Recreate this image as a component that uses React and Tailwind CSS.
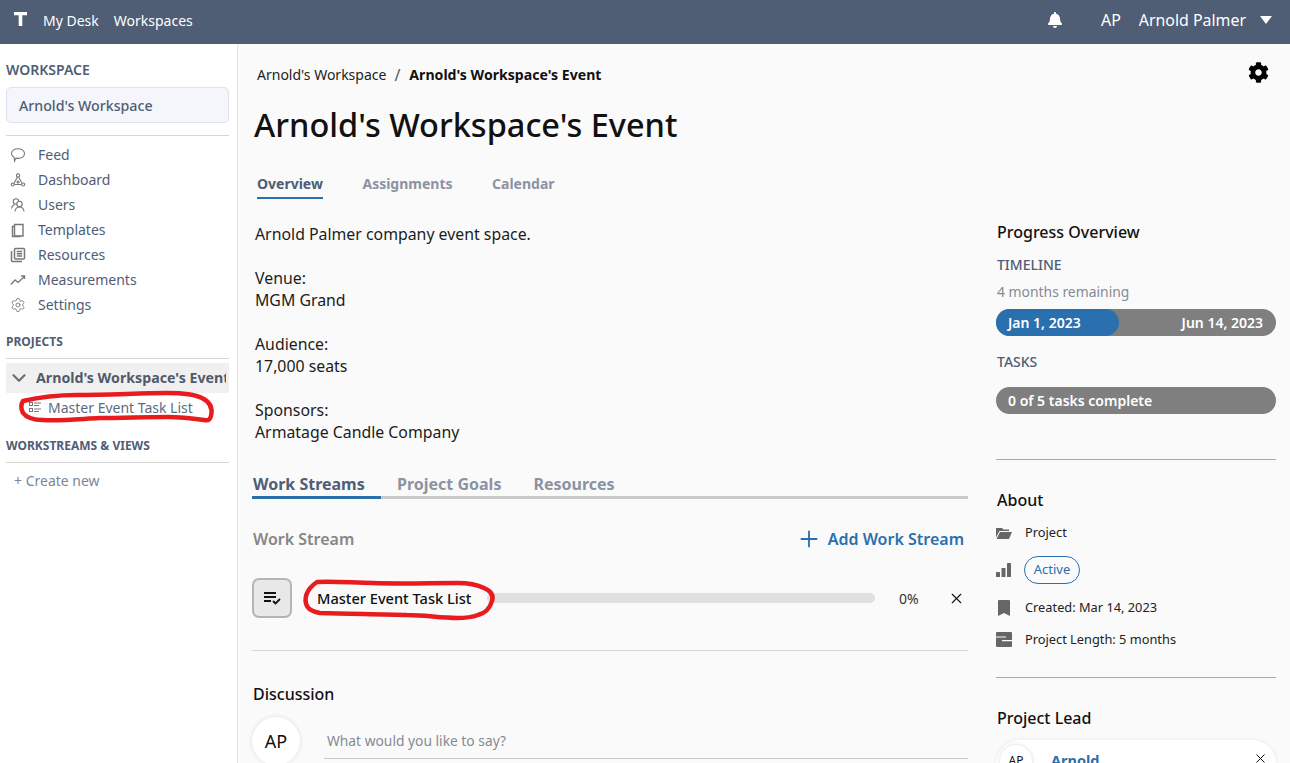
import React from "react";
import { Settings, ChevronDown, Plus, X } from "lucide-react";

const iconProps = { width: 16, height: 16, viewBox: "0 0 16 16", fill: "none", stroke: "currentColor", strokeWidth: 1.1, className: "text-[#777]" };

const FeedIcon = () => (
  <svg {...iconProps}><path d="M8 1.800c3.700 0 6.500 2 6.500 4.800S11.700 11.400 8 11.400c-.7 0-1.300 0-2-.2L4.500 14l-.3-3.500C2.600 9.600 1.500 8.200 1.500 6.600c0-2.800 2.800-4.800 6.500-4.800z" /></svg>
);
const DashIcon = () => (
  <svg {...iconProps}><circle cx="8" cy="3.500" r="1.600" /><circle cx="2.800" cy="12.500" r="1.500" /><circle cx="13.200" cy="12.500" r="1.500" /><circle cx="8" cy="10" r="1" /><path d="M7.400 5L4 11.300M8.600 5L12 11.300M4.300 12.500h7.400" /></svg>
);
const UsersIcon = () => (
  <svg {...iconProps}><circle cx="6" cy="4.500" r="2.700" /><path d="M1.500 11.500c.3-2 1.500-3.400 3-3.800" /><circle cx="9.500" cy="7" r="2.700" fill="#fff" /><path d="M5 14.500c.3-2.700 2-4.500 4.500-4.500s4.200 1.800 4.500 4.500" /></svg>
);
const TemplatesIcon = () => (
  <svg {...iconProps} strokeWidth={1.4}><path d="M4.500 2.500h8.500v11.500H4.500z" /><path d="M4.500 4.500H2.500v10h8" /></svg>
);
const ResourcesIcon = () => (
  <svg {...iconProps} strokeWidth={1.5}><rect x="4.500" y="1.500" width="10" height="10.500" rx="1" /><path d="M1.500 4v9.500a1 1 0 001 1H12M6.800 4.500h5.400M6.800 6.800h5.400M6.800 9.100h5.400" /></svg>
);
const MeasureIcon = () => (
  <svg {...iconProps} strokeWidth={1.3}><path d="M1 12.500l4-4.500 3 2.500 6.500-6M11 4h3.500v3" /></svg>
);
const SettingsIcon = () => <Settings size={16} strokeWidth={1.3} className="text-[#777]" />;

const nav = [
  ["Feed", FeedIcon],
  ["Dashboard", DashIcon],
  ["Users", UsersIcon],
  ["Templates", TemplatesIcon],
  ["Resources", ResourcesIcon],
  ["Measurements", MeasureIcon],
  ["Settings", SettingsIcon],
];

function Gear({ className }) {
  return (
    <svg viewBox="0 0 512 512" className={className} fill="currentColor">
      <path d="M487.4 315.7l-42.6-24.6c4.3-23.2 4.3-47 0-70.2l42.6-24.6c4.9-2.8 7.1-8.6 5.5-14-11.1-35.6-30-67.8-54.7-94.6-3.8-4.1-10-5.1-14.8-2.3L380.8 110c-17.9-15.4-38.5-27.3-60.8-35.1V25.8c0-5.6-3.9-10.5-9.4-11.7-36.7-8.2-74.3-7.8-109.2 0-5.5 1.2-9.4 6.1-9.4 11.7V75c-22.2 7.9-42.8 19.8-60.8 35.1L88.7 85.5c-4.9-2.8-11-1.9-14.8 2.3-24.7 26.7-43.6 58.9-54.7 94.6-1.7 5.4.6 11.2 5.5 14L67.3 221c-4.3 23.2-4.3 47 0 70.2l-42.6 24.6c-4.9 2.8-7.1 8.6-5.5 14 11.1 35.6 30 67.8 54.7 94.6 3.8 4.1 10 5.1 14.8 2.3l42.6-24.6c17.9 15.4 38.5 27.3 60.8 35.1v49.2c0 5.6 3.9 10.5 9.4 11.7 36.7 8.2 74.3 7.8 109.2 0 5.5-1.2 9.4-6.1 9.4-11.7v-49.2c22.2-7.9 42.8-19.8 60.8-35.1l42.6 24.6c4.9 2.8 11 1.9 14.8-2.3 24.7-26.7 43.6-58.9 54.7-94.6 1.500-5.500-.7-11.300-5.600-14.100zM256 336c-44.100 0-80-35.900-80-80s35.900-80 80-80 80 35.900 80 80-35.900 80-80 80z" />
    </svg>
  );
}

function Rule({ className = "" }) {
  return <div className={`h-px shrink-0 ${className}`} />;
}

function Sidebar() {
  return (
    <aside className="w-[238px] shrink-0 border-r border-[#e4e4e4] bg-white pl-[6px] pr-2 text-[#4f5d75]">
      <div className="mt-[18px] text-[14px] leading-[16px] font-semibold">WORKSPACE</div>
      <div className="mt-[9px] flex h-[36px] items-center rounded-[5px] border border-[#dfe1ef] bg-[#f5f6fb] pl-[12px] pt-[2px] text-[14.2px] font-medium">
        Arnold's Workspace
      </div>
      <Rule className="mt-[12px] bg-[#d5d5d5]" />
      <nav className="mt-[6px] flex flex-col">
        {nav.map(([label, Icon]) => (
          <div key={label} className="flex h-[25px] items-center text-[14px]">
            <span className="flex w-[32px] shrink-0 pl-[4px]">
              <Icon />
            </span>
            {label}
          </div>
        ))}
      </nav>
      <div className="mt-[18px] text-[12px] leading-[14px] font-bold">PROJECTS</div>
      <Rule className="mt-[9px] bg-[#d5d5d5]" />
      <div className="mt-[4px] flex h-[30px] items-center overflow-hidden bg-[#f0f0f0] text-[14.2px] font-bold whitespace-nowrap">
        <span className="flex w-[30px] shrink-0 pl-[2px]">
          <ChevronDown size={22} strokeWidth={2.4} className="text-[#6f6f6f]" />
        </span>
        <span className="w-[190px] overflow-hidden text-[#525a6b]">Arnold's Workspace's Event</span>
      </div>
      <div className="flex h-[28px] items-center pl-[22px] text-[14px] text-[#5c6b84]">
        <svg viewBox="0 0 14 12" className="mr-[6px] h-[12px] w-[14px] text-[#777]" fill="none" stroke="currentColor">
          <rect x="1.500" y="1.500" width="3" height="3" />
          <rect x="1.500" y="7.500" width="3" height="3" />
          <path d="M6 2h7M6 4.500h5M6 8h7M6 10.500h5" />
        </svg>
        Master Event Task List
      </div>
      <div className="mt-[18px] text-[12px] leading-[14px] font-bold">WORKSTREAMS &amp; VIEWS</div>
      <Rule className="mt-[9px] bg-[#d5d5d5]" />
      <div className="mt-[8px] pl-[8px] text-[14px] leading-[19px] text-[#7d8797]">+ Create new</div>
    </aside>
  );
}

function Tab({ children, active }) {
  return (
    <span className={`pb-[3px] text-[14px] font-bold ${active ? "border-b-2 border-[#2a70ae] text-[#4f5d75]" : "text-[#8b93a3]"}`}>
      {children}
    </span>
  );
}

function LeftColumn() {
  return (
    <div className="w-[716px] shrink-0">
      <div className="pl-[3px] text-[15.85px] leading-[22px] text-[#1c1c1c]">
        <p>Arnold Palmer company event space.</p>
        <p className="mt-[22px]">Venue:<br />MGM Grand</p>
        <p className="mt-[22px]">Audience:<br />17,000 seats</p>
        <p className="mt-[22px]">Sponsors:<br />Armatage Candle Company</p>
      </div>
      <div className="mt-[28px] flex h-[28px] border-b-[3px] border-[#c9cacd] text-[16px] leading-[26px] font-bold text-[#8b93a3]">
        <span className="h-[28px] w-[129px] border-b-[3px] border-[#2a70ae] pl-[1px] text-[#4f5d75]">Work Streams</span>
        <span className="ml-[16px]">Project Goals</span>
        <span className="ml-[32px]">Resources</span>
      </div>
      <div className="mt-[29px] flex h-[22px] items-center justify-between pl-[1px] pr-[4px]">
        <span className="text-[16px] leading-[22px] font-semibold text-[#868686]">Work Stream</span>
        <span className="flex items-center gap-[6px] text-[16px] leading-[22px] font-semibold text-[#2a70ae]">
          <Plus size={26} strokeWidth={1.7} />
          Add Work Stream
        </span>
      </div>
      <div className="mt-[28px] flex items-center pr-[3px]">
        <span className="flex h-[40px] w-[40px] shrink-0 items-center justify-center rounded-[7px] border-2 border-[#b4b4b4] bg-[#e8e8e8]">
          <svg viewBox="0 0 18 14" className="h-[14px] w-[18px] text-[#111]" fill="none" stroke="currentColor" strokeWidth="1.800">
            <path d="M1 2h12M1 6h12M1 10h7M10 10l2.500 2.500L17 8" />
          </svg>
        </span>
        <span className="ml-[25px] mt-[2px] text-[14.6px] font-medium text-[#111] whitespace-nowrap">Master Event Task List</span>
        <span className="ml-[16px] h-[10px] flex-1 rounded-full bg-[#e0e0df]" />
        <span className="ml-[24px] w-[20px] text-[14px] whitespace-nowrap text-[#333]">0%</span>
        <X size={17} strokeWidth={1.6} className="ml-[29px] text-[#111]" />
      </div>
      <Rule className="mt-[32px] bg-[#d5d5d5]" />
      <div className="mt-[32px] pl-[1px] text-[16px] leading-[22px] font-medium text-[#111]">Discussion</div>
      <div className="mt-[12px] flex items-start">
        <span className="flex h-[48px] w-[48px] shrink-0 items-center justify-center rounded-full bg-white text-[18px] text-[#111] shadow-[0_0_4px_rgba(0,0,0,0.12)]">AP</span>
        <div className="ml-[24px] mt-[6px] flex h-[36px] flex-1 items-center border-b border-[#c9c9c9] pl-[3px] pt-[2px] text-[13.8px] text-[#858a94]">What would you like to say?</div>
      </div>
    </div>
  );
}

function Detail({ icon, children }) {
  return (
    <div className="flex items-center text-[12.8px] text-[#222]">
      <span className="flex w-[29px] shrink-0 text-[#666]">{icon}</span>
      {children}
    </div>
  );
}

function RightColumn() {
  return (
    <div className="ml-[28px] w-[280px] shrink-0">
      <div className="mt-[-2px] pl-[1px] text-[16px] leading-[22px] font-medium text-[#111]">Progress Overview</div>
      <div className="mt-[12px] pl-[1px] text-[14px] leading-[20px] font-medium text-[#4f5d75]">TIMELINE</div>
      <div className="mt-[7px] pl-[1px] text-[13.9px] leading-[20px] text-[#858a94]">4 months remaining</div>
      <div className="relative mt-[7px] flex h-[27px] items-center justify-between rounded-full bg-[#7f7f7f] pl-[12px] pr-[13px] text-[14px] font-semibold text-white">
        <span className="absolute inset-y-0 left-0 w-[123px] rounded-full bg-[#2a70ae]" />
        <span className="relative">Jan 1, 2023</span>
        <span className="relative">Jun 14, 2023</span>
      </div>
      <div className="mt-[16px] pl-[1px] text-[14px] leading-[20px] font-medium text-[#4f5d75]">TASKS</div>
      <div className="mt-[15px] flex h-[27px] items-center rounded-full bg-[#7f7f7f] px-[12px] text-[14px] font-semibold text-white">0 of 5 tasks complete</div>
      <Rule className="mt-[45px] bg-[#a8a8a8]" />
      <div className="mt-[29px] pl-[1px] text-[16px] leading-[22px] font-medium text-[#111]">About</div>
      <div className="mt-[12px]">
        <Detail icon={
          <svg viewBox="0 0 16 12" className="h-[12px] w-[16px]" fill="currentColor"><path d="M0 1h6l1.500 1.500H13v1.500H3.500L0 10.500zM4 5h12l-3 7H0.500z" /></svg>
        }>Project</Detail>
      </div>
      <div className="mt-[14px]">
        <Detail icon={
          <svg viewBox="0 0 15 14" className="h-[14px] w-[15px]" fill="currentColor"><rect x="0" y="9" width="4" height="5" rx="0.500" /><rect x="5.500" y="5" width="4" height="9" rx="0.500" /><rect x="11" y="0" width="4" height="14" rx="0.500" /></svg>
        }>
          <span className="ml-[-1px] flex h-[28px] w-[56px] items-center justify-center rounded-full border border-[#2a70ae] text-[13px] text-[#2a70ae]">Active</span>
        </Detail>
      </div>
      <div className="mt-[14px]">
        <Detail icon={
          <svg viewBox="0 0 12 16" className="ml-[2px] h-[16px] w-[12px]" fill="currentColor"><path d="M0 1a1 1 0 011-1h10a1 1 0 011 1v15l-6-3-6 3z" /></svg>
        }>Created: Mar 14, 2023</Detail>
      </div>
      <div className="mt-[13px]">
        <Detail icon={
          <svg viewBox="0 0 16 15" className="h-[15px] w-[16px]" fill="currentColor" fillRule="evenodd"><path d="M1 0h14a1 1 0 011 1v13a1 1 0 01-1 1H1a1 1 0 01-1-1V1a1 1 0 011-1zM0 4.500v1h10v-1zM6 8v1.200h10V8z" /></svg>
        }>Project Length: 5 months</Detail>
      </div>
      <Rule className="mt-[27px] bg-[#a8a8a8]" />
      <div className="mt-[29px] pl-[1px] text-[16px] leading-[22px] font-medium text-[#111]">Project Lead</div>
      <div className="mt-[11px] flex h-[48px] items-start rounded-full bg-white pl-[4px] pr-[8px] pt-[5px] shadow-[0_0_4px_rgba(0,0,0,0.08)]">
        <span className="flex h-[32px] w-[32px] shrink-0 items-center justify-center rounded-full bg-white text-[12px] text-[#111] shadow-[0_0_4px_rgba(0,0,0,0.15)]">AP</span>
        <span className="ml-[19px] mt-[5px] text-[14.5px] font-bold text-[#2a70ae]">Arnold</span>
        <X size={15} strokeWidth={1.6} className="ml-auto mt-[6px] text-[#111]" />
      </div>
    </div>
  );
}

function Annotations() {
  return (
    <svg className="pointer-events-none absolute inset-0 h-full w-full" viewBox="0 0 1290 763" fill="none" stroke="#e81c1f" strokeWidth="4.500" strokeLinecap="round" strokeLinejoin="round">
      <path d="M23 401C40 397 60 395 77 395C110 395 140 393 167 393C182 393 194 394 202 398C210 402 213 408 211 416C210 420 208 421 204 420C190 418 180 417 167 417C145 417 122 418 100 418C80 419 60 421 43 420C33 420 26 417 23 413C21 409 21 404 23 401Z" />
      <path d="M317 582C335 581 355 583 373 583C400 584 430 583 457 583C470 583 478 585 484 588C491 591 494 595 492 601C490 608 486 613 478 615C470 618 463 618 457 618C440 618 425 615 407 615C380 614 350 614 320 613C314 612 309 610 307 606C304 600 305 590 317 582Z" />
    </svg>
  );
}

export default function App() {
  return (
    <div className="relative flex h-[763px] w-full flex-col overflow-hidden bg-[#fafafa] font-['Noto_Sans',sans-serif]">
      <header className="flex h-[44px] shrink-0 items-center bg-[#4f5d75] pb-[4px] pl-[14px] pr-[18px] text-white">
        <svg viewBox="0 0 13 14" className="mb-[2px] h-[14px] w-[13px]" fill="currentColor"><path d="M0 0h13v3.200H8.300V14H4.700V3.200H0z" /></svg>
        <span className="ml-[16px] text-[14px]">My Desk</span>
        <span className="ml-[15px] text-[14px]">Workspaces</span>
        <svg viewBox="0 0 448 512" className="ml-auto h-[16px] w-[14px]" fill="currentColor">
          <path d="M224 512c35.300 0 64-28.700 64-64H160c0 35.300 28.700 64 64 64zm215.400-149.700c-19.300-20.800-55.500-52-55.500-154.300 0-77.700-54.500-139.900-127.900-155.200V32c0-17.700-14.300-32-32-32s-32 14.300-32 32v20.800C118.600 68.100 64.100 130.300 64.100 208c0 102.300-36.200 133.500-55.500 154.300-6 6.400-8.700 14.100-8.600 21.700.1 16.400 13 32 32.100 32h383.800c19.100 0 32-15.600 32.100-32 .1-7.600-2.600-15.300-8.600-21.700z" />
        </svg>
        <span className="ml-[39px] text-[16px]">AP</span>
        <span className="ml-[18px] mt-[2px] text-[15.9px]">Arnold Palmer</span>
        <span className="ml-[14px] h-0 w-0 border-x-[6px] border-t-[8px] border-x-transparent border-t-white" />
      </header>
      <div className="flex min-h-0 flex-1">
        <Sidebar />
        <main className="min-w-0 flex-1 pl-[14px] pr-[21px]">
          <div className="flex items-center pt-[20px]">
            <span className="ml-[5px] text-[14px] leading-[22px] text-[#222]">Arnold's Workspace</span>
            <span className="ml-[8px] mr-[9px] text-[16px] leading-[22px] text-[#555]">/</span>
            <span className="text-[14.1px] leading-[22px] font-bold text-[#111]">Arnold's Workspace's Event</span>
            <Gear className="ml-auto -mt-[6px] h-[21px] w-[21px] text-black" />
          </div>
          <h1 className="mt-[17px] ml-[2px] text-[32.5px] leading-[44px] font-medium text-[#111]">Arnold's Workspace's Event</h1>
          <div className="mt-[26px] ml-[5px] flex gap-[39.5px]">
            <Tab active>Overview</Tab>
            <Tab>Assignments</Tab>
            <Tab>Calendar</Tab>
          </div>
          <div className="mt-[24px] flex">
            <LeftColumn />
            <RightColumn />
          </div>
        </main>
      </div>
      <Annotations />
    </div>
  );
}
